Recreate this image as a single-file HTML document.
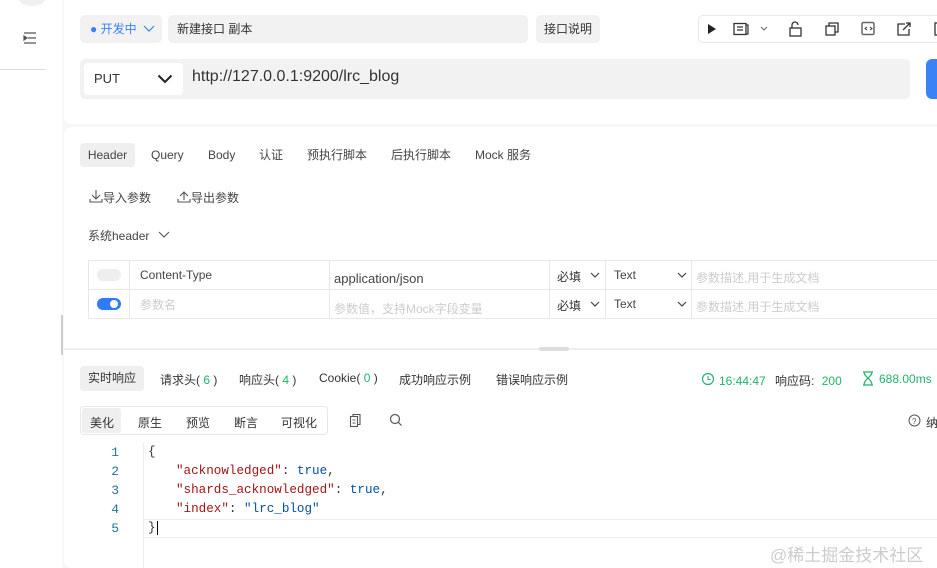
<!DOCTYPE html>
<html><head><meta charset="utf-8"><style>
*{box-sizing:border-box;margin:0;padding:0}
body{width:937px;height:568px;overflow:hidden;background:#f7f7f7;font-family:"Liberation Sans","Noto Sans CJK SC",sans-serif;font-size:12px;color:#333;position:relative}
.abs{position:absolute}
.side{left:0;top:0;width:62px;height:568px;background:#fff}
.card{background:#fff;border-radius:8px}
.gray{background:#f2f2f2;border-radius:5px}
.tab{position:absolute;top:143px;height:24px;line-height:24px;font-size:12px;color:#444}
.code{font-family:"Liberation Mono",monospace;font-size:12.6px;position:absolute;left:148px}
.ln{position:absolute;left:105px;width:14px;text-align:right;color:#237893;font-family:"Liberation Mono",monospace;font-size:13px}
.ic{position:absolute;top:20px}
svg.ch{position:absolute}
</style></head><body>
<div class="abs side">
 <div class="abs" style="left:18px;top:-12px;width:28px;height:18px;border-radius:50%;background:#f0f0f0"></div>
 <div class="abs" style="left:0;top:69px;width:46px;height:1px;background:#ddd"></div>
 <svg class="ch" style="left:23px;top:32px" width="14" height="12"><path d="M1 1h12M5 6h8M1 11h12M1 4l3 2-3 2z" stroke="#555" stroke-width="1.2" fill="#555"/></svg>
 <div class="abs" style="left:61px;top:315px;width:2px;height:40px;background:#ccc"></div>
</div>
<div class="abs card" style="left:64px;top:0;width:880px;height:124px;border-radius:0 0 8px 8px"></div>
<div class="abs card" style="left:64px;top:127px;width:880px;height:441px"></div>

<div class="abs gray" style="left:80px;top:15px;width:82px;height:28px;color:#3b82f6;font-size:12px;line-height:28px;padding-left:10px">● 开发中</div>
<svg class="ch" style="left:143px;top:25px" width="12" height="8"><path d="M1 1l5 5 5-5" stroke="#3b82f6" fill="none" stroke-width="1.2"/></svg>
<div class="abs gray" style="left:168px;top:15px;width:360px;height:28px;line-height:28px;padding-left:9px;font-size:12px">新建接口 副本</div>
<div class="abs gray" style="left:536px;top:15px;width:64px;height:28px;line-height:28px;text-align:center;font-size:12px">接口说明</div>
<div class="abs" style="left:698px;top:15px;width:250px;height:28px;border:1px solid #e8e8e8;border-radius:5px;background:#fff"></div>
<svg class="ch" style="left:700px;top:16px" width="240" height="26">
<path d="M8 8l8 5-8 5z" fill="#222"/>
<rect x="34" y="7.5" width="12" height="11" fill="none" stroke="#333" stroke-width="1.3"/><path d="M46 9h2v9h-2M37 11h6M37 14h6" stroke="#333" stroke-width="1.2" fill="none"/>
<path d="M61 11l3 3 3-3" stroke="#666" fill="none"/>
<rect x="90" y="12" width="11" height="8" fill="none" stroke="#333" stroke-width="1.3"/><path d="M92 12V9a3 3 0 0 1 6 0" stroke="#333" fill="none" stroke-width="1.3"/>
<rect x="126" y="10" width="9" height="9" fill="none" stroke="#333" stroke-width="1.3"/><path d="M129 10V7h9v9h-3" stroke="#333" fill="none" stroke-width="1.3"/>
<rect x="162" y="6.5" width="12" height="12" rx="1.5" fill="none" stroke="#666" stroke-width="1.5"/><path d="M167 11l-2 1.5 2 1.5M170 11l2 1.5-2 1.5" stroke="#333" fill="none"/>
<path d="M205 8h-7v11h11v-6M203 14l7-7M206 7h4v4" stroke="#333" fill="none" stroke-width="1.3"/>
<rect x="235" y="7" width="10" height="12" fill="none" stroke="#333" stroke-width="1.3"/>
</svg>

<div class="abs gray" style="left:80px;top:59px;width:830px;height:40px"></div>
<div class="abs" style="left:84px;top:63px;width:99px;height:32px;background:#fff;border-radius:4px;line-height:32px;padding-left:10px;font-size:13px">PUT</div>
<svg class="ch" style="left:157px;top:74px" width="16" height="10"><path d="M1.5 1.5l6.5 6.5 6.5-6.5" stroke="#222" fill="none" stroke-width="2"/></svg>
<div class="abs" style="left:192px;top:68px;font-size:16px;color:#333">http://127.0.0.1:9200/lrc_blog</div>
<div class="abs" style="left:926px;top:59px;width:20px;height:40px;background:#3b82f6;border-radius:6px"></div>

<div class="tab" style="left:80px;width:55px;background:#efefef;border-radius:4px;text-align:center">Header</div>
<div class="tab" style="left:151px">Query</div>
<div class="tab" style="left:208px">Body</div>
<div class="tab" style="left:259px">认证</div>
<div class="tab" style="left:307px">预执行脚本</div>
<div class="tab" style="left:391px">后执行脚本</div>
<div class="tab" style="left:475px">Mock 服务</div>
<svg class="ch" style="left:89px;top:189px" width="14" height="14"><path d="M7 1v9M3 6l4 4 4-4M1 10v3h12v-3" stroke="#555" fill="none" stroke-width="1.1"/></svg>
<div class="abs" style="left:103px;top:189px;color:#444">导入参数</div>
<svg class="ch" style="left:177px;top:189px" width="14" height="14"><path d="M7 11V3M3 7l4-4 4 4M1 10v3h12v-3" stroke="#555" fill="none" stroke-width="1.1"/></svg>
<div class="abs" style="left:191px;top:189px;color:#444">导出参数</div>
<div class="abs" style="left:88px;top:227px;color:#444">系统header</div>
<svg class="ch" style="left:158px;top:231px" width="12" height="8"><path d="M1 1l5 5 5-5" stroke="#555" fill="none" stroke-width="1.1"/></svg>

<div class="abs" style="left:88px;top:260px;width:860px;height:59px;border:1px solid #e8e8e8"></div>
<div class="abs" style="left:88px;top:289px;width:860px;height:1px;background:#e8e8e8"></div>
<div class="abs" style="left:129px;top:260px;width:1px;height:59px;background:#e8e8e8"></div>
<div class="abs" style="left:329px;top:260px;width:1px;height:59px;background:#e8e8e8"></div>
<div class="abs" style="left:549px;top:260px;width:1px;height:59px;background:#e8e8e8"></div>
<div class="abs" style="left:605px;top:260px;width:1px;height:59px;background:#e8e8e8"></div>
<div class="abs" style="left:691px;top:260px;width:1px;height:59px;background:#e8e8e8"></div>
<div class="abs" style="left:97px;top:269px;width:24px;height:12px;border-radius:6px;background:#eee"></div>
<div class="abs" style="left:97px;top:298px;width:24px;height:12px;border-radius:6px;background:#2f7cf6"><div class="abs" style="left:13px;top:2px;width:8px;height:8px;border-radius:50%;background:#fff"></div></div>
<div class="abs" style="left:140px;top:268px;color:#444">Content-Type</div>
<div class="abs" style="left:140px;top:296px;color:#ccc">参数名</div>
<div class="abs" style="left:334px;top:271px;color:#444;font-size:13px">application/json</div>
<div class="abs" style="left:334px;top:300px;color:#ccc">参数值，支持Mock字段变量</div>
<div class="abs" style="left:557px;top:268px">必填</div>
<div class="abs" style="left:557px;top:297px">必填</div>
<svg class="ch" style="left:590px;top:272px" width="10" height="6"><path d="M1 1l4 4 4-4" stroke="#444" fill="none" stroke-width="1.2"/></svg>
<svg class="ch" style="left:590px;top:301px" width="10" height="6"><path d="M1 1l4 4 4-4" stroke="#444" fill="none" stroke-width="1.2"/></svg>
<div class="abs" style="left:614px;top:268px;color:#444">Text</div>
<div class="abs" style="left:614px;top:297px;color:#444">Text</div>
<svg class="ch" style="left:677px;top:272px" width="10" height="6"><path d="M1 1l4 4 4-4" stroke="#444" fill="none" stroke-width="1.2"/></svg>
<svg class="ch" style="left:677px;top:301px" width="10" height="6"><path d="M1 1l4 4 4-4" stroke="#444" fill="none" stroke-width="1.2"/></svg>
<div class="abs" style="left:696px;top:269px;color:#ccc">参数描述,用于生成文档</div>
<div class="abs" style="left:696px;top:298px;color:#ccc">参数描述,用于生成文档</div>

<div class="abs" style="left:64px;top:348px;width:880px;height:2px;background:#eee"></div>
<div class="abs" style="left:539px;top:347px;width:30px;height:4px;border-radius:2px;background:#ddd"></div>

<div class="abs" style="left:80px;top:366px;width:64px;height:25px;background:#efefef;border-radius:4px;line-height:25px;text-align:center">实时响应</div>
<div class="abs" style="left:160px;top:371px">请求头(<span style="color:#22b36b"> 6 </span>)</div>
<div class="abs" style="left:239px;top:371px">响应头(<span style="color:#22b36b"> 4 </span>)</div>
<div class="abs" style="left:319px;top:371px">Cookie(<span style="color:#22b36b"> 0 </span>)</div>
<div class="abs" style="left:399px;top:371px">成功响应示例</div>
<div class="abs" style="left:496px;top:371px">错误响应示例</div>
<svg class="ch" style="left:701px;top:372px" width="14" height="14"><circle cx="7" cy="7" r="5.5" stroke="#22b36b" fill="none" stroke-width="1.2"/><path d="M7 4v3.5h2.5" stroke="#22b36b" fill="none"/></svg>
<div class="abs" style="left:719px;top:372px;color:#22b36b">16:44:47 <span style="color:#333;margin-left:6px">响应码:</span> <span style="margin-left:4px">200</span></div>
<svg class="ch" style="left:862px;top:371px" width="12" height="15"><path d="M1 1h10M1 14h10M2 1c0 5 8 7 8 13M10 1c0 5-8 7-8 13" stroke="#22b36b" fill="none" stroke-width="1.2"/></svg>
<div class="abs" style="left:879px;top:372px;color:#22b36b">688.00ms</div>

<div class="abs" style="left:80px;top:406px;width:248px;height:29px;border:1px solid #e8e8e8;border-radius:4px"></div>
<div class="abs" style="left:82px;top:408px;width:39px;height:25px;background:#efefef;border-radius:3px"></div>
<div class="abs" style="left:90px;top:414px">美化</div>
<div class="abs" style="left:138px;top:414px">原生</div>
<div class="abs" style="left:186px;top:414px">预览</div>
<div class="abs" style="left:234px;top:414px">断言</div>
<div class="abs" style="left:281px;top:414px">可视化</div>
<svg class="ch" style="left:349px;top:413px" width="13" height="15"><rect x="1.5" y="3.5" width="7" height="10" fill="none" stroke="#555" stroke-width="1.1"/><path d="M4 3.5V1.5h7v10H8.5M3.5 7h3M3.5 10h3" stroke="#555" fill="none" stroke-width="1.1"/></svg>
<svg class="ch" style="left:389px;top:413px" width="14" height="14"><circle cx="6" cy="6" r="4.5" stroke="#555" fill="none" stroke-width="1.2"/><path d="M9.5 9.5l3 3" stroke="#555" stroke-width="1.2"/></svg>
<svg class="ch" style="left:908px;top:414px" width="13" height="13"><circle cx="6.5" cy="6.5" r="5.5" stroke="#555" fill="none"/><text x="4" y="10" font-size="8" fill="#555" font-family="Liberation Sans">?</text></svg>
<div class="abs" style="left:926px;top:414px">纳</div>

<div class="abs" style="left:143px;top:443px;width:1px;height:125px;background:#eee"></div>
<div class="abs" style="left:143px;top:519px;width:800px;height:1px;background:#eee"></div>
<div class="abs" style="left:143px;top:537px;width:800px;height:1px;background:#eee"></div>
<div class="ln" style="top:445px">1</div><div class="ln" style="top:464px">2</div><div class="ln" style="top:483px">3</div><div class="ln" style="top:502px">4</div><div class="ln" style="top:521px">5</div>
<div class="code" style="top:445px">{</div>
<div class="code" style="top:464px;left:176px"><span style="color:#a31515">"acknowledged"</span>: <span style="color:#0451a5">true</span>,</div>
<div class="code" style="top:483px;left:176px"><span style="color:#a31515">"shards_acknowledged"</span>: <span style="color:#0451a5">true</span>,</div>
<div class="code" style="top:502px;left:176px"><span style="color:#a31515">"index"</span>: <span style="color:#0451a5">"lrc_blog"</span></div>
<div class="code" style="top:521px">}<span style="border-left:1.5px solid #000;margin-left:1px"></span></div>
<div class="abs" style="left:770px;top:541px;font-size:17px;color:#ccc">@稀土掘金技术社区</div>
</body></html>
